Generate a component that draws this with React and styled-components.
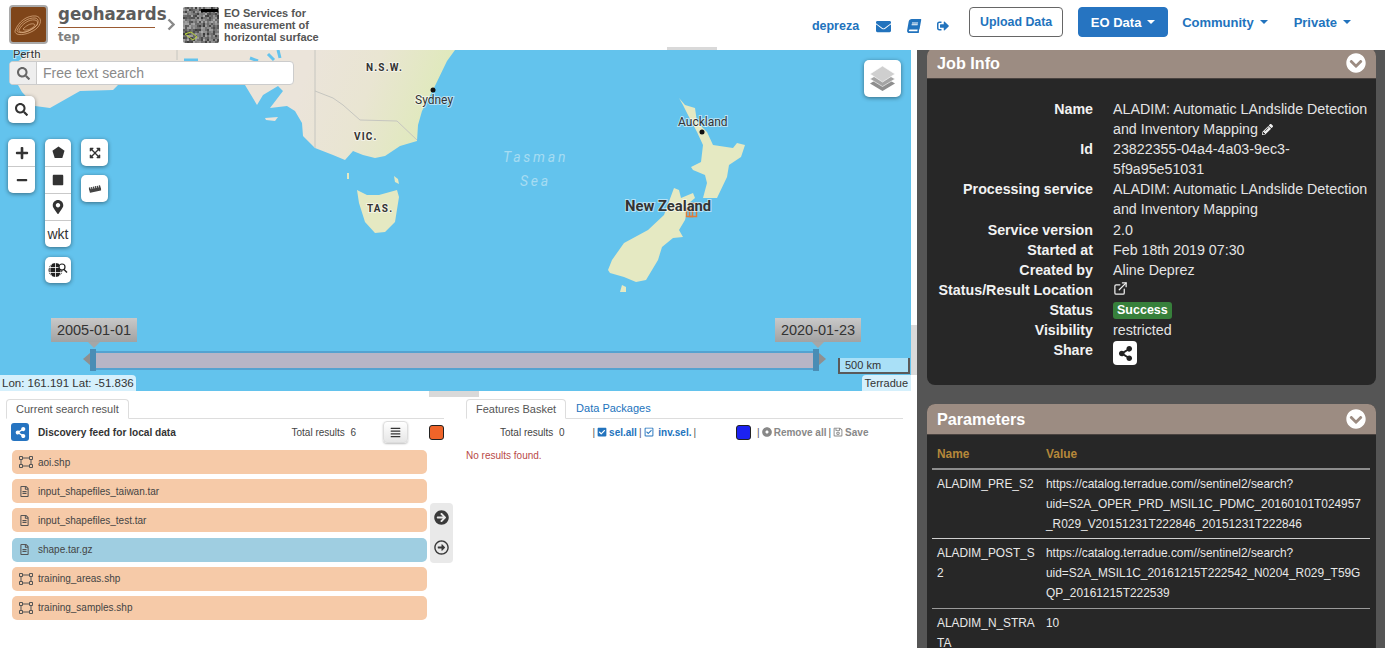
import React, { useMemo } from "react";
import styled, { createGlobalStyle } from "styled-components";
import {
    FaEnvelope,
    FaBook,
    FaSignOutAlt,
    FaChevronCircleDown,
    FaPencilAlt,
    FaShareAlt,
    FaSearch,
    FaPlus,
    FaMinus,
    FaSquare,
    FaMapMarkerAlt,
    FaExpandArrowsAlt,
    FaRulerHorizontal,
    FaRegFileAlt,
    FaAlignJustify,
    FaCheckSquare,
    FaRegCheckSquare,
    FaDotCircle,
    FaRegSave,
    FaArrowCircleRight,
    FaRegArrowAltCircleRight,
} from "react-icons/fa";
import { FiExternalLink } from "react-icons/fi";

const GlobalStyle = createGlobalStyle`
    html, body {
        margin: 0;
        height: 648px;
        overflow: hidden;
        background: #fff;
        font-family: "Liberation Sans", Arial, sans-serif;
        color: #333;
    }
    * { box-sizing: border-box; }
`;

const BLUE = "#2273bd";

const Page = styled.div`
    width: 1387px;
    height: 648px;
    overflow: hidden;
    display: flex;
    flex-direction: column;
`;

/* ---------- header ---------- */

const TopBar = styled.header`
    height: 50px;
    flex: none;
    position: relative;
    z-index: 2;
    background: #fff;
    display: flex;
    align-items: flex-start;
    padding: 0 36px 0 9px;
`;

const LogoBox = styled.div`
    width: 39px;
    height: 39px;
    margin-top: 5px;
    border: 2px solid #a9a9a9;
    border-radius: 4px;
    background: #7f4519;
    overflow: hidden;
    svg { display: block; }
`;

const Brand = styled.div`
    margin: 2px 0 0 10px;
    width: 97px;
    font-family: "DejaVu Sans Condensed", "DejaVu Sans", sans-serif;
    font-weight: 700;
    color: #5c5c5c;
`;

const BrandName = styled.div`
    font-size: 18.5px;
    line-height: 23px;
    white-space: nowrap;
    border-bottom: 1px solid #9a5a32;
    height: 26px;
`;

const BrandSub = styled.div`
    font-size: 13px;
    line-height: 16px;
    margin-top: 1px;
    color: #808080;
`;

const Crumb = styled.svg`
    margin: 18px 8px 0 12px;
`;

const Thumb = styled.svg`
    margin-top: 7px;
    border-radius: 2px;
`;

const ServiceName = styled.div`
    margin: 7px 0 0 5px;
    width: 115px;
    font-size: 11px;
    line-height: 12px;
    font-weight: 700;
    color: #555;
`;

const Nav = styled.nav`
    margin-left: auto;
    display: flex;
    align-items: flex-start;
`;

const UserName = styled.a`
    margin-top: 19px;
    font-size: 12.5px;
    line-height: 14px;
    font-weight: 700;
    color: ${BLUE};
`;

const NavIcon = styled.span`
    margin: 19px 0 0 ${(p) => p.$gap}px;
    height: 14px;
    display: flex;
    align-items: center;
    color: ${BLUE};
    font-size: ${(p) => p.$size}px;
    transform: ${(p) => (p.$slant ? "skewX(-10deg)" : "none")};
`;

const NavButton = styled.a`
    margin: 7px 0 0 ${(p) => p.$gap}px;
    height: 30px;
    width: ${(p) => p.$width}px;
    display: flex;
    align-items: center;
    justify-content: center;
    border-radius: 4px;
    font-size: ${(p) => (p.$solid ? 13 : 12.4)}px;
    font-weight: 700;
    padding-bottom: ${(p) => (p.$solid ? 0 : 1)}px;
    border: 1px solid ${(p) => (p.$solid ? "#2674c1" : "#666")};
    background: ${(p) => (p.$solid ? "#2674c1" : "#fff")};
    color: ${(p) => (p.$solid ? "#fff" : BLUE)};
`;

const NavLink = styled.a`
    margin: 7px 0 0 ${(p) => p.$gap}px;
    height: 30px;
    display: flex;
    align-items: center;
    font-size: 13px;
    font-weight: 700;
    color: ${BLUE};
`;

const Caret = styled.i`
    margin-left: 6px;
    border-top: 4px solid currentColor;
    border-left: 4px solid transparent;
    border-right: 4px solid transparent;
`;

/* ---------- main layout ---------- */

const Main = styled.main`
    flex: 1;
    min-height: 0;
    display: flex;
`;

const LeftColumn = styled.div`
    width: 917px;
    flex: none;
    position: relative;
`;

const SplitHandle = styled.div`
    position: absolute;
    background: #d9d9d9;
    left: ${(p) => p.$x}px;
    top: ${(p) => p.$y}px;
    width: ${(p) => p.$w}px;
    height: ${(p) => p.$h}px;
    z-index: 3;
`;

/* ---------- map ---------- */

const MapArea = styled.div`
    position: relative;
    width: 911px;
    height: 341px;
    background: #63c3ed;
    overflow: hidden;
`;

const MapCanvas = styled.svg`
    position: absolute;
    left: 0;
    top: 0;
`;

const Tools = styled.div`
    position: absolute;
    left: 8px;
    top: 11px;
    display: flex;
    flex-direction: column;
    align-items: flex-start;
`;

const SearchBox = styled.div`
    margin-left: 1px;
    width: 285px;
    height: 24px;
    display: flex;
    background: #fff;
    border: 1px solid #ccc;
    border-radius: 4px;
    overflow: hidden;
`;

const SearchAddon = styled.span`
    width: 27px;
    display: flex;
    align-items: center;
    justify-content: center;
    background: #eee;
    border-right: 1px solid #ccc;
    color: #666;
    font-size: 13px;
`;

const SearchInput = styled.span`
    padding-left: 6px;
    font-size: 14px;
    line-height: 22px;
    color: #8a8a8a;
`;

const ToolGroup = styled.div`
    margin-top: ${(p) => p.$top || 0}px;
    width: ${(p) => p.$w || 27}px;
    background: #fff;
    border-radius: 5px;
    box-shadow: 0 1px 4px rgba(0, 0, 0, 0.45);
    display: flex;
    flex-direction: column;
`;

const ToolButton = styled.div`
    height: ${(p) => p.$h || 27}px;
    display: flex;
    align-items: center;
    justify-content: center;
    color: #333;
    font-size: ${(p) => p.$size || 13}px;
    & + & { border-top: 1px solid #c9c9c9; }
`;

const ToolRow = styled.div`
    margin-top: 16px;
    display: flex;
    align-items: flex-start;
`;

const ToolColumn = styled.div`
    margin-left: ${(p) => p.$gap || 0}px;
    display: flex;
    flex-direction: column;
`;

const TiltedRuler = styled(FaRulerHorizontal)`
    transform: rotate(-12deg);
    color: #444;
`;

const LayersButton = styled.div`
    position: absolute;
    right: 10px;
    top: 10px;
    width: 37px;
    height: 37px;
    background: #fff;
    border-radius: 5px;
    box-shadow: 0 1px 4px rgba(0, 0, 0, 0.45);
    display: flex;
    align-items: center;
    justify-content: center;
`;

const DateLabel = styled.div`
    position: absolute;
    left: ${(p) => p.$x}px;
    top: 268px;
    width: 86px;
    height: 24px;
    background: linear-gradient(#c9c9c9, #a2a2a2);
    font-size: 14.5px;
    line-height: 25px;
    text-align: center;
    color: #333;
    &::after {
        content: "";
        position: absolute;
        left: 50%;
        margin-left: -6px;
        top: 24px;
        border-top: 6px solid #a6a6a6;
        border-left: 6px solid transparent;
        border-right: 6px solid transparent;
    }
`;

const Track = styled.div`
    position: absolute;
    left: 96px;
    top: 301px;
    width: 718px;
    height: 19px;
    background: #b8b5c6;
    border-top: 2px solid #55a2d0;
    border-bottom: 2px solid #55a2d0;
`;

const Handle = styled.div`
    position: absolute;
    left: ${(p) => p.$x}px;
    top: 299px;
    width: 6px;
    height: 22px;
    background: #4a8db5;
`;

const HandleArrow = styled.div`
    position: absolute;
    left: ${(p) => p.$x}px;
    top: 303px;
    border-top: 6px solid transparent;
    border-bottom: 6px solid transparent;
    ${(p) => (p.$right ? "border-left" : "border-right")}: 7px solid #8f8f8f;
`;

const ScaleLine = styled.div`
    position: absolute;
    right: 1px;
    top: 308px;
    width: 72px;
    height: 16px;
    background: #a9e0f7;
    border: 2px solid #5a5a5a;
    border-top: none;
    font-size: 11px;
    line-height: 15px;
    padding-left: 5px;
`;

const MapNote = styled.div`
    position: absolute;
    bottom: 0;
    ${(p) => (p.$right ? "right: 0;" : "left: 0;")}
    height: 16px;
    padding: 0 ${(p) => (p.$right ? 3 : 2)}px;
    background: #d5f0fc;
    border-radius: ${(p) => (p.$right ? "4px 0 0 0" : "0 4px 0 0")};
    font-size: ${(p) => (p.$right ? 11 : 11.5)}px;
    line-height: 17px;
    color: #333;
`;

/* ---------- result panes ---------- */

const Panes = styled.div`
    display: flex;
    padding: 8px 0 0 6px;
    gap: 22px;
`;

const Pane = styled.section`
    width: ${(p) => p.$w}px;
    flex: none;
`;

const Tabs = styled.div`
    height: 20px;
    display: flex;
    border-bottom: 1px solid #ddd;
`;

const Tab = styled.div`
    height: 20px;
    padding: 0 ${(p) => (p.$active ? 9 : 10)}px;
    font-size: 11px;
    line-height: 19px;
    color: ${(p) => (p.$active ? "#555" : BLUE)};
    ${(p) =>
        p.$active &&
        `background: #fff;
        border: 1px solid #ddd;
        border-bottom-color: #fff;
        border-radius: 4px 4px 0 0;`}
`;

const PaneBar = styled.div`
    height: 26px;
    padding-left: ${(p) => p.$pad}px;
    display: flex;
    align-items: center;
    font-size: 10px;
    color: #444;
    white-space: nowrap;
`;

const ShareBadge = styled.span`
    width: 18px;
    height: 18px;
    border-radius: 3px;
    background: #2674c1;
    color: #fff;
    font-size: 11px;
    display: flex;
    align-items: center;
    justify-content: center;
`;

const FeedTitle = styled.b`
    margin-left: 9px;
    font-size: 10.15px;
    color: #333;
`;

const Total = styled.span`
    margin-left: ${(p) => p.$left || "auto"};
    margin-right: ${(p) => p.$right}px;
`;

const MenuButton = styled.span`
    width: 25px;
    height: 22px;
    margin-right: 21px;
    border-radius: 4px;
    border: 1px solid #ddd;
    background: linear-gradient(#fff, #e6e6e6);
    box-shadow: 0 1px 2px rgba(0, 0, 0, 0.25);
    display: flex;
    align-items: center;
    justify-content: center;
    font-size: 11px;
    color: #333;
`;

const Swatch = styled.span`
    width: 15px;
    height: 15px;
    flex: none;
    border-radius: 3px;
    border: 1px solid #222;
    background: ${(p) => p.$color};
    margin-left: ${(p) => p.$left || 0}px;
`;

const Pipe = styled.span`
    color: #555;
    margin: 0 ${(p) => p.$right || 2}px 0 ${(p) => p.$left || 2}px;
`;

const SelectLink = styled.b`
    color: ${BLUE};
    display: inline-flex;
    align-items: center;
    gap: 2px;
`;

const BasketAction = styled.b`
    color: #888;
    display: inline-flex;
    align-items: center;
    gap: 2px;
`;

const ResultsRow = styled.div`
    margin-top: 5px;
    display: flex;
    padding-left: 6px;
`;

const ResultList = styled.div`
    flex: 0 0 415px;
    display: flex;
    flex-direction: column;
    gap: 5.2px;
`;

const ResultItem = styled.div`
    height: 24px;
    border-radius: 5px;
    background: ${(p) => (p.$selected ? "#9fcee1" : "#f6caa8")};
    display: flex;
    align-items: center;
    padding-left: 7px;
    font-size: 10px;
    color: #444;
`;

const ItemIcon = styled.span`
    width: 19px;
    display: flex;
    font-size: 11px;
    color: #555;
`;

const MovePanel = styled.div`
    flex: none;
    width: 23px;
    height: 60px;
    margin: 53px 0 0 3px;
    border-radius: 4px;
    background: #e9e9e9;
    display: flex;
    flex-direction: column;
    align-items: center;
    justify-content: center;
    gap: 15px;
    padding-bottom: 2px;
    color: #3a3a3a;
    font-size: 15px;
`;

const EmptyNote = styled.div`
    margin-top: 5px;
    font-size: 10px;
    color: #b94a48;
`;

/* ---------- right column ---------- */

const SidePanel = styled.aside`
    width: 468px;
    flex: none;
    height: 600px;
    background: #555;
    padding: 0 9px 0 10px;
    overflow: hidden;
    margin-top: -2px;
`;

const Card = styled.section`
    background: #272727;
    border-radius: 8px;
    margin-bottom: ${(p) => p.$bottom || 0}px;
    overflow: hidden;
`;

const CardHead = styled.h3`
    margin: 0;
    height: ${(p) => p.$h}px;
    background: #9c8c82;
    border-bottom: 1px solid #4a4340;
    display: flex;
    align-items: center;
    justify-content: space-between;
    padding: 0 10px;
    font-size: 16.2px;
    font-weight: 700;
    color: #fff;
    svg { font-size: 20px; }
`;

const InfoGrid = styled.dl`
    margin: 0;
    height: 306px;
    padding: 20px 6px 0 0;
    display: grid;
    grid-template-columns: 166px 1fr;
    column-gap: 20px;
    grid-auto-rows: min-content;
    font-size: 14.25px;
    line-height: 20.1px;
    color: #e4e4e4;
`;

const InfoLabel = styled.dt`
    font-weight: 700;
    text-align: right;
    color: #f2f2f2;
    white-space: nowrap;
`;

const InfoValue = styled.dd`
    margin: 0;
    svg { vertical-align: -1px; color: #eee; }
`;

const StatusBadge = styled.span`
    display: inline-block;
    padding: 0 4px;
    height: 17px;
    border-radius: 3px;
    background: #37803b;
    color: #fff;
    font-size: 12.5px;
    font-weight: 700;
    line-height: 17px;
    vertical-align: 1px;
`;

const ShareButton = styled.span`
    display: flex;
    align-items: center;
    justify-content: center;
    margin-top: 1px;
    width: 24px;
    height: 24px;
    border-radius: 4px;
    background: #fff;
    font-size: 15px;
    svg { color: #222; }
`;

const ParamTable = styled.table`
    margin: 0 5px;
    width: 438px;
    table-layout: fixed;
    border-collapse: collapse;
    font-size: 11.9px;
    line-height: 20px;
    color: #e8e8e8;
    th {
        height: 34px;
        padding: 4px 5px 0;
        text-align: left;
        color: #b5873a;
        font-weight: 700;
        border-bottom: 2px solid #8d8d8d;
    }
    td {
        vertical-align: top;
        padding: 4px 5px;
        overflow-wrap: anywhere;
        word-break: break-word;
        border-bottom: 1px solid #cfcfcf;
    }
    tr:nth-child(2) td {
        padding-bottom: 5px;
        border-bottom-color: #9a9a9a;
    }
`;

/* ---------- drawings ---------- */

const Logo = () => (
    <svg width="35" height="35" viewBox="0 0 35 35" fill="none" stroke="#e3b48a" strokeWidth="0.7">
        <path d="M4 24c3-9 12-16 21-15 5 1 6 6 2 11-5 6-17 9-21 7-2-1-2-2-2-3z" />
        <path d="M6 23.500c3-8 11-13 18-12.500 4 .5 4 5 1 8-5 5-14 8-18 6-1-.5-1-1-1-1.500z" />
        <path d="M8 23c3-6 10-11 16-10 4 1 3 5 0 7-5 4-11 6-14 5-2 0-2-1-2-2z" />
        <path d="M12 22c3-3 7-6 11-5 2 1 0 3-2 4-3 2-7 3-9 1z" />
    </svg>
);

const NoiseThumb = () => {
    const cells = useMemo(() => {
        let seed = 17;
        const out = [];
        for (let y = 0; y < 36; y += 2) {
            for (let x = 0; x < 36; x += 2) {
                seed = (seed * 1103 + 12345) % 65536;
                const v = 60 + (seed % 110);
                out.push({ x, y, fill: `rgb(${v},${v},${v})` });
            }
        }
        return out;
    }, []);
    return (
        <Thumb width="36" height="36" viewBox="0 0 36 36">
            {cells.map((c) => (
                <rect key={`${c.x}-${c.y}`} x={c.x} y={c.y} width="2" height="2" fill={c.fill} />
            ))}
            <rect x="18" y="2" width="17" height="3" fill="#000" />
            <path d="M2 27l6-2 6 5-4 3z" fill="none" stroke="#b8d23a" strokeWidth="1" />
        </Thumb>
    );
};

const Pentagon = () => (
    <svg width="13" height="13" viewBox="0 0 14 14">
        <path d="M7 .5l6.500 4.700-2.400 7.800H2.900L.5 5.200z" fill="#333" />
    </svg>
);

const GlobeSearch = () => (
    <svg width="20" height="16" viewBox="0 0 20 16" fill="none">
        <circle cx="7.500" cy="8" r="7" fill="#222" />
        <path d="M.5 5.500h14M.5 10.500h14M7.500 1v14M3.500 2c-2 3.500-2 8.500 0 12M11.500 2c2 3.500 2 8.500 0 12" stroke="#fff" strokeWidth="0.8" />
        <circle cx="14" cy="5" r="3" fill="#fff" stroke="#222" strokeWidth="1.2" />
        <path d="M16 7.500l3 3" stroke="#222" strokeWidth="1.400" />
    </svg>
);

const Layers = () => (
    <svg width="25" height="27" viewBox="0 0 25 27">
        <path d="M12.500 11L25 18.500 12.500 26 0 18.500z" fill="#8e8e8e" />
        <path d="M12.500 6.500L25 14 12.500 21.500 0 14z" fill="#a4a4a4" stroke="#fff" strokeWidth="0.6" />
        <path d="M12.500 1L25 9 12.500 17 0 9z" fill="#cfcfcf" stroke="#fff" strokeWidth="0.6" />
    </svg>
);

const ShapeIcon = () => (
    <svg width="14" height="12" viewBox="0 0 14 12" fill="none" stroke="#555" strokeWidth="1">
        <path d="M2 2h10v8H2z" />
        <path d="M.5.500h3v3h-3zM10.500.500h3v3h-3zM.5 8.500h3v3h-3zM10.500 8.500h3v3h-3z" fill="#f6caa8" />
    </svg>
);

const MapLabel = styled.text`
    font-family: "Roboto", "Liberation Sans", sans-serif;
    font-size: ${(p) => p.$size}px;
    font-weight: ${(p) => (p.$strong ? 700 : 400)};
    font-style: ${(p) => (p.$sea ? "italic" : "normal")};
    letter-spacing: ${(p) => p.$spacing || 0}px;
    fill: ${(p) => (p.$sea ? "#a6dcf2" : "#333")};
    stroke: ${(p) => (p.$sea ? "none" : "rgba(255,255,255,0.55)")};
    stroke-width: ${(p) => (p.$sea ? 0 : 2)}px;
    paint-order: stroke;
`;

const MapDrawing = () => (
    <MapCanvas width="911" height="341" viewBox="0 50 911 341">
        <defs>
            <linearGradient id="landFill" gradientUnits="userSpaceOnUse" x1="310" y1="60" x2="445" y2="110">
                <stop offset="0" stopColor="#ebe4da" />
                <stop offset="0.45" stopColor="#e9e5d2" />
                <stop offset="1" stopColor="#deeab8" />
            </linearGradient>
        </defs>
        <g fill="url(#landFill)">
            <path d="M30 50L20 60 10 66 18 85 22 92 35 106 50 108 80 91 113 90 118 85 180 80 245 85 257 105 263 95 278 86 283 91 270 108 287 106 295 111 302 123 303 136 315 148 333 155 345 160 353 151 363 155 375 158 385 156 400 146 417 141 418 125 422 111 433 90 447 61 455 50z" />
            <path d="M265 118l13-1-3 4-9-1z" />
        </g>
        <g fill="#e5e9c2">
            <path d="M357 190l10 5h12l18-5 2 7-4 25-10 10-10 1-10-11-6-19z" />
            <path d="M347 173h2v6h-2zM394 176l4 3 1 5-4-2z" />
            <path d="M679 98l6 7 10 3 2 14 10 10 6 13 20 3 4-5 8 2-4 12-12 8-2 12-10 21h-14l4-15-2-8-12-5-2-3 10-5 2-17-6-13-8-15-6-12z" />
            <path d="M608 270l4-10 12-17 24-13 16-15 10-27 5 2 2 8 12-5 2 5-6 5-4 17-6 10 4 7-10 1-11 9-4 13-12 20-10 2-12-5-14-4z" />
            <path d="M620 292l2-7 4 2v5z" />
        </g>
        <path d="M315 50v98M177 50v10M315 91l18 7 10 7 17 15 37 1 20 19" fill="none" stroke="#c6c6c0" strokeWidth="1" />
        <path d="M184 60h14M250 58l8 3M268 54l6 6M278 50l2 8" stroke="#63c3ed" strokeWidth="3" />
        <circle cx="433" cy="90" r="2.500" fill="#111" />
        <circle cx="702" cy="132" r="2.500" fill="#111" />
        <g fill="none" stroke="#e07b39" strokeWidth="1.500">
            <rect x="686.500" y="208.500" width="6" height="8" />
            <rect x="689.500" y="203.500" width="7" height="13" />
        </g>
        <MapLabel x="13" y="58" $size={11.500}>Perth</MapLabel>
        <MapLabel x="366" y="71" $size={10} $strong $spacing={1.2}>N.S.W.</MapLabel>
        <MapLabel x="354" y="140" $size={10} $strong $spacing={1.2}>VIC.</MapLabel>
        <MapLabel x="367" y="212" $size={10} $strong $spacing={1.2}>TAS.</MapLabel>
        <MapLabel x="415" y="104" $size={12}>Sydney</MapLabel>
        <MapLabel x="678" y="126" $size={12}>Auckland</MapLabel>
        <MapLabel x="625" y="211" $size={14.800} $strong>New Zealand</MapLabel>
        <MapLabel x="503" y="162" $size={14} $sea $spacing={2.8}>Tasman</MapLabel>
        <MapLabel x="520" y="186" $size={14} $sea $spacing={2.8}>Sea</MapLabel>
    </MapCanvas>
);

const results = [
    { name: "aoi.shp", shape: true },
    { name: "input_shapefiles_taiwan.tar" },
    { name: "input_shapefiles_test.tar" },
    { name: "shape.tar.gz", selected: true },
    { name: "training_areas.shp", shape: true },
    { name: "training_samples.shp", shape: true },
];

const App = () => (
    <Page>
        <GlobalStyle />
        <TopBar>
            <LogoBox>
                <Logo />
            </LogoBox>
            <Brand>
                <BrandName>geohazards</BrandName>
                <BrandSub>tep</BrandSub>
            </Brand>
            <Crumb width="8" height="13" viewBox="0 0 8 13" fill="none">
                <path d="M1.500 1.500l5 5-5 5" stroke="#8a8a8a" strokeWidth="2.400" />
            </Crumb>
            <NoiseThumb />
            <ServiceName>EO Services for measurement of horizontal surface</ServiceName>
            <Nav>
                <UserName>depreza</UserName>
                <NavIcon $gap={17} $size={15}>
                    <FaEnvelope />
                </NavIcon>
                <NavIcon $gap={16} $size={14} $slant>
                    <FaBook />
                </NavIcon>
                <NavIcon $gap={16} $size={12}>
                    <FaSignOutAlt />
                </NavIcon>
                <NavButton $gap={20} $width={94}>Upload Data</NavButton>
                <NavButton $gap={15} $width={90} $solid>
                    EO Data
                    <Caret />
                </NavButton>
                <NavLink $gap={14}>
                    Community
                    <Caret />
                </NavLink>
                <NavLink $gap={26}>
                    Private
                    <Caret />
                </NavLink>
            </Nav>
        </TopBar>
        <Main>
            <LeftColumn>
                <SplitHandle $x={667} $y={-3} $w={50} $h={3} />
                <SplitHandle $x={911} $y={275} $w={6} $h={50} />
                <SplitHandle $x={429} $y={341} $w={50} $h={6} />
                <MapArea>
                    <MapDrawing />
                    <Tools>
                        <SearchBox>
                            <SearchAddon>
                                <FaSearch />
                            </SearchAddon>
                            <SearchInput>Free text search</SearchInput>
                        </SearchBox>
                        <ToolGroup $top={11}>
                            <ToolButton>
                                <FaSearch />
                            </ToolButton>
                        </ToolGroup>
                        <ToolRow>
                            <ToolGroup>
                                <ToolButton $size={14}>
                                    <FaPlus />
                                </ToolButton>
                                <ToolButton $size={12}>
                                    <FaMinus />
                                </ToolButton>
                            </ToolGroup>
                            <ToolColumn $gap={10}>
                                <ToolGroup $w={26}>
                                    <ToolButton>
                                        <Pentagon />
                                    </ToolButton>
                                    <ToolButton $size={12}>
                                        <FaSquare />
                                    </ToolButton>
                                    <ToolButton $size={14}>
                                        <FaMapMarkerAlt />
                                    </ToolButton>
                                    <ToolButton $size={14}>wkt</ToolButton>
                                </ToolGroup>
                                <ToolGroup $w={26} $top={10}>
                                    <ToolButton $h={26}>
                                        <GlobeSearch />
                                    </ToolButton>
                                </ToolGroup>
                            </ToolColumn>
                            <ToolColumn $gap={10}>
                                <ToolGroup>
                                    <ToolButton $size={12}>
                                        <FaExpandArrowsAlt />
                                    </ToolButton>
                                </ToolGroup>
                                <ToolGroup $top={9}>
                                    <ToolButton $size={12}>
                                        <TiltedRuler />
                                    </ToolButton>
                                </ToolGroup>
                            </ToolColumn>
                        </ToolRow>
                    </Tools>
                    <LayersButton>
                        <Layers />
                    </LayersButton>
                    <DateLabel $x={51}>2005-01-01</DateLabel>
                    <DateLabel $x={775}>2020-01-23</DateLabel>
                    <Track />
                    <HandleArrow $x={83} />
                    <Handle $x={90} />
                    <Handle $x={813} />
                    <HandleArrow $x={819} $right />
                    <ScaleLine>500 km</ScaleLine>
                    <MapNote>Lon: 161.191 Lat: -51.836</MapNote>
                    <MapNote $right>Terradue</MapNote>
                </MapArea>
                <Panes>
                    <Pane $w={438}>
                        <Tabs>
                            <Tab $active>Current search result</Tab>
                        </Tabs>
                        <PaneBar $pad={5}>
                            <ShareBadge>
                                <FaShareAlt />
                            </ShareBadge>
                            <FeedTitle>Discovery feed for local data</FeedTitle>
                            <Total $right={27}>Total results&nbsp; 6</Total>
                            <MenuButton>
                                <FaAlignJustify />
                            </MenuButton>
                            <Swatch $color="#ef6429" />
                        </PaneBar>
                        <ResultsRow>
                            <ResultList>
                                {results.map((item) => (
                                    <ResultItem key={item.name} $selected={item.selected}>
                                        <ItemIcon>{item.shape ? <ShapeIcon /> : <FaRegFileAlt />}</ItemIcon>
                                        {item.name}
                                    </ResultItem>
                                ))}
                            </ResultList>
                            <MovePanel>
                                <FaArrowCircleRight />
                                <FaRegArrowAltCircleRight />
                            </MovePanel>
                        </ResultsRow>
                    </Pane>
                    <Pane $w={437}>
                        <Tabs>
                            <Tab $active>Features Basket</Tab>
                            <Tab>Data Packages</Tab>
                        </Tabs>
                        <PaneBar $pad={34}>
                            <Total $left="0" $right={26}>Total results&nbsp; 0</Total>
                            <Pipe>|</Pipe>
                            <SelectLink>
                                <FaCheckSquare />
                                sel.all
                            </SelectLink>
                            <Pipe>|</Pipe>
                            <SelectLink>
                                <FaRegCheckSquare />
                                &nbsp;inv.sel.
                            </SelectLink>
                            <Pipe>|</Pipe>
                            <Swatch $color="#1c22f2" $left={38} />
                            <Pipe $left={6}>|</Pipe>
                            <BasketAction>
                                <FaDotCircle />
                                Remove all
                            </BasketAction>
                            <Pipe>|</Pipe>
                            <BasketAction>
                                <FaRegSave />
                                Save
                            </BasketAction>
                        </PaneBar>
                        <EmptyNote>No results found.</EmptyNote>
                    </Pane>
                </Panes>
            </LeftColumn>
            <SidePanel>
                <Card $bottom={19}>
                    <CardHead $h={31}>
                        Job Info
                        <FaChevronCircleDown />
                    </CardHead>
                    <InfoGrid>
                        <InfoLabel>Name</InfoLabel>
                        <InfoValue>
                            ALADIM: Automatic LAndslide Detection and Inventory Mapping <FaPencilAlt size={11} />
                        </InfoValue>
                        <InfoLabel>Id</InfoLabel>
                        <InfoValue>23822355-04a4-4a03-9ec3-5f9a95e51031</InfoValue>
                        <InfoLabel>Processing service</InfoLabel>
                        <InfoValue>ALADIM: Automatic LAndslide Detection and Inventory Mapping</InfoValue>
                        <InfoLabel>Service version</InfoLabel>
                        <InfoValue>2.0</InfoValue>
                        <InfoLabel>Started at</InfoLabel>
                        <InfoValue>Feb 18th 2019 07:30</InfoValue>
                        <InfoLabel>Created by</InfoLabel>
                        <InfoValue>Aline Deprez</InfoValue>
                        <InfoLabel>Status/Result Location</InfoLabel>
                        <InfoValue>
                            <FiExternalLink size={15} />
                        </InfoValue>
                        <InfoLabel>Status</InfoLabel>
                        <InfoValue>
                            <StatusBadge>Success</StatusBadge>
                        </InfoValue>
                        <InfoLabel>Visibility</InfoLabel>
                        <InfoValue>restricted</InfoValue>
                        <InfoLabel>Share</InfoLabel>
                        <InfoValue>
                            <ShareButton>
                                <FaShareAlt />
                            </ShareButton>
                        </InfoValue>
                    </InfoGrid>
                </Card>
                <Card>
                    <CardHead $h={31}>
                        Parameters
                        <FaChevronCircleDown />
                    </CardHead>
                    <ParamTable>
                        <colgroup>
                            <col style={{ width: 109 }} />
                            <col />
                        </colgroup>
                        <thead>
                            <tr>
                                <th>Name</th>
                                <th>Value</th>
                            </tr>
                        </thead>
                        <tbody>
                            <tr>
                                <td>ALADIM_PRE_S2</td>
                                <td>
                                    https://catalog.terradue.com//sentinel2/search?
                                    <br />
                                    uid=S2A_OPER_PRD_MSIL1C_PDMC_20160101T024957_R029_V20151231T222846_20151231T222846
                                </td>
                            </tr>
                            <tr>
                                <td>ALADIM_POST_S2</td>
                                <td>
                                    https://catalog.terradue.com//sentinel2/search?
                                    <br />
                                    uid=S2A_MSIL1C_20161215T222542_N0204_R029_T59GQP_20161215T222539
                                </td>
                            </tr>
                            <tr>
                                <td>ALADIM_N_STRATA</td>
                                <td>10</td>
                            </tr>
                        </tbody>
                    </ParamTable>
                </Card>
            </SidePanel>
        </Main>
    </Page>
);

export default App;
